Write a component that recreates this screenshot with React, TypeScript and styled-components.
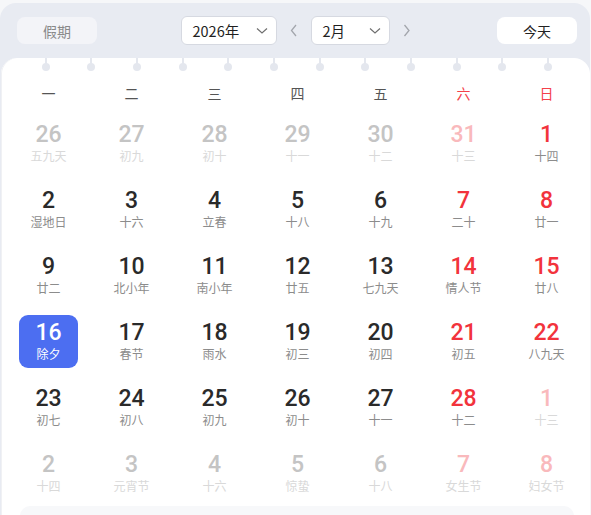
import React from "react";
import styled, { createGlobalStyle } from "styled-components";

const Global = createGlobalStyle`
  html, body { margin: 0; padding: 0; background: #f6f7f9; }
  body { font-family: "Noto Sans CJK SC", "Noto Sans", sans-serif; }
`;

const Panel = styled.div`
  margin-top: 3px;
  width: 590px;
  height: 512px;
  background: #e8ebf2;
  border-radius: 16px 16px 0 0;
  display: flex;
  flex-direction: column;
  overflow: hidden;
`;

const Header = styled.div`
  height: 55px;
  flex: none;
  display: flex;
  align-items: center;
  justify-content: space-between;
  padding: 0 13px 0 17px;
  box-sizing: border-box;
`;

const PillButton = styled.button<{ $light?: boolean }>`
  width: 80px;
  height: 27px;
  border: none;
  border-radius: 8px;
  background: ${(p) => (p.$light ? "#ffffff" : "#f3f4f8")};
  color: ${(p) => (p.$light ? "#222" : "#8a8a8a")};
  font-family: "Noto Sans CJK SC", sans-serif;
  font-size: 14px;
  padding: 0;
  display: flex;
  align-items: center;
  justify-content: center;
`;

const Center = styled.div`
  display: flex;
  align-items: center;
  margin-left: 10px;
`;

const Select = styled.div<{ $w: number }>`
  width: ${(p) => p.$w}px;
  height: 29px;
  box-sizing: border-box;
  background: #fff;
  border: 1px solid #d6d9e1;
  border-radius: 6px;
  display: flex;
  align-items: center;
  justify-content: space-between;
  padding: 0 8px 0 11px;
  font-size: 14.5px;
  color: #1f1f1f;
  font-family: "Noto Sans CJK SC", sans-serif;
`;

const Arrow = styled.div`
  width: 34px;
  display: flex;
  align-items: center;
  justify-content: center;
  color: #a3a6ad;
`;

const Card = styled.div`
  flex: 1;
  margin-left: 1px;
  background: #fff;
  border-radius: 16px 16px 0 0;
  display: flex;
  flex-direction: column;
  box-shadow: inset 1px 0 0 #f0f1f4;
`;

const Holes = styled.div`
  display: flex;
  height: 16px;
  padding-left: 22px;
`;

const Hole = styled.div`
  width: 45.65px;
  position: relative;
  &::before {
    content: "";
    position: absolute;
    left: 50%;
    top: 0;
    width: 2px;
    margin-left: -1px;
    height: 8px;
    background: #e4e7ee;
  }
  &::after {
    content: "";
    position: absolute;
    left: 50%;
    top: 5px;
    width: 8px;
    height: 8px;
    margin-left: -4px;
    border-radius: 50%;
    background: #e4e7ee;
  }
`;

const Grid = styled.div`
  display: grid;
  grid-template-columns: repeat(7, 1fr);
  padding: 0 2px 0 6px;
`;

const WeekLabel = styled.div<{ $red?: boolean }>`
  height: 36px;
  display: flex;
  align-items: center;
  justify-content: center;
  font-size: 14px;
  color: ${(p) => (p.$red ? "#f4414a" : "#555")};
  padding-top: 1px;
  box-sizing: border-box;
`;

const Cell = styled.div`
  height: 66px;
  display: flex;
  align-items: center;
  justify-content: center;
`;

const Day = styled.div<{ $sel?: boolean }>`
  width: 59px;
  height: 53px;
  border-radius: 9px;
  background: ${(p) => (p.$sel ? "#4c6ef1" : "transparent")};
  display: flex;
  flex-direction: column;
  align-items: center;
  justify-content: center;
`;

const Num = styled.div<{ $color: string }>`
  font-family: "Roboto", "DejaVu Sans", sans-serif;
  font-weight: 500;
  font-size: 23px;
  line-height: 25px;
  color: ${(p) => p.$color};
`;

const Lunar = styled.div<{ $color: string }>`
  font-size: 12px;
  line-height: 17px;
  color: ${(p) => p.$color};
  white-space: nowrap;
`;

const Footer = styled.div`
  margin: 0 16px 0 19px;
  height: 20px;
  background: #f7f8fa;
  border-radius: 10px 10px 0 0;
`;

const Chevron = ({ dir }: { dir: "down" | "left" | "right" }) => {
  if (dir === "down")
    return (
      <svg width="12" height="8" viewBox="0 0 12 8">
        <path d="M1 1.5 L6 6 L11 1.5" fill="none" stroke="#707070" strokeWidth="1.2" />
      </svg>
    );
  const d = dir === "left" ? "M6 1 L1.5 6.5 L6 12" : "M1.5 1 L6 6.5 L1.5 12";
  return (
    <svg width="8" height="13" viewBox="0 0 8 13">
      <path d={d} fill="none" stroke="#a3a6ad" strokeWidth="1.3" />
    </svg>
  );
};

type D = { n: number; l: string; o?: boolean; sel?: boolean };

const rows: D[][] = [
  [
    { n: 26, l: "五九天", o: true },
    { n: 27, l: "初九", o: true },
    { n: 28, l: "初十", o: true },
    { n: 29, l: "十一", o: true },
    { n: 30, l: "十二", o: true },
    { n: 31, l: "十三", o: true },
    { n: 1, l: "十四" },
  ],
  [
    { n: 2, l: "湿地日" },
    { n: 3, l: "十六" },
    { n: 4, l: "立春" },
    { n: 5, l: "十八" },
    { n: 6, l: "十九" },
    { n: 7, l: "二十" },
    { n: 8, l: "廿一" },
  ],
  [
    { n: 9, l: "廿二" },
    { n: 10, l: "北小年" },
    { n: 11, l: "南小年" },
    { n: 12, l: "廿五" },
    { n: 13, l: "七九天" },
    { n: 14, l: "情人节" },
    { n: 15, l: "廿八" },
  ],
  [
    { n: 16, l: "除夕", sel: true },
    { n: 17, l: "春节" },
    { n: 18, l: "雨水" },
    { n: 19, l: "初三" },
    { n: 20, l: "初四" },
    { n: 21, l: "初五" },
    { n: 22, l: "八九天" },
  ],
  [
    { n: 23, l: "初七" },
    { n: 24, l: "初八" },
    { n: 25, l: "初九" },
    { n: 26, l: "初十" },
    { n: 27, l: "十一" },
    { n: 28, l: "十二" },
    { n: 1, l: "十三", o: true },
  ],
  [
    { n: 2, l: "十四", o: true },
    { n: 3, l: "元宵节", o: true },
    { n: 4, l: "十六", o: true },
    { n: 5, l: "惊蛰", o: true },
    { n: 6, l: "十八", o: true },
    { n: 7, l: "女生节", o: true },
    { n: 8, l: "妇女节", o: true },
  ],
];

const weekdays = ["一", "二", "三", "四", "五", "六", "日"];

function colors(d: D, col: number): [string, string] {
  const weekend = col >= 5;
  if (d.sel) return ["#ffffff", "#ffffff"];
  if (d.o) return [weekend ? "#f9b9bc" : "#c4c4c4", "#d9d9d9"];
  return [weekend ? "#f2333c" : "#2a2a2a", "#8c8c8c"];
}

export default function App() {
  return (
    <>
      <Global />
      <Panel>
        <Header>
          <PillButton>假期</PillButton>
          <Center>
            <Select $w={96}>
              <span>2026年</span>
              <Chevron dir="down" />
            </Select>
            <Arrow>
              <Chevron dir="left" />
            </Arrow>
            <Select $w={79}>
              <span>2月</span>
              <Chevron dir="down" />
            </Select>
            <Arrow>
              <Chevron dir="right" />
            </Arrow>
          </Center>
          <PillButton $light>今天</PillButton>
        </Header>
        <Card>
          <Holes>
            {Array.from({ length: 12 }).map((_, i) => (
              <Hole key={i} />
            ))}
          </Holes>
          <Grid>
            {weekdays.map((w, i) => (
              <WeekLabel key={w} $red={i >= 5}>
                {w}
              </WeekLabel>
            ))}
            {rows.map((r, ri) =>
              r.map((d, ci) => {
                const [nc, lc] = colors(d, ci);
                return (
                  <Cell key={`${ri}-${ci}`}>
                    <Day $sel={d.sel}>
                      <Num $color={nc}>{d.n}</Num>
                      <Lunar $color={lc}>{d.l}</Lunar>
                    </Day>
                  </Cell>
                );
              })
            )}
          </Grid>
          <Footer />
        </Card>
      </Panel>
    </>
  );
}
